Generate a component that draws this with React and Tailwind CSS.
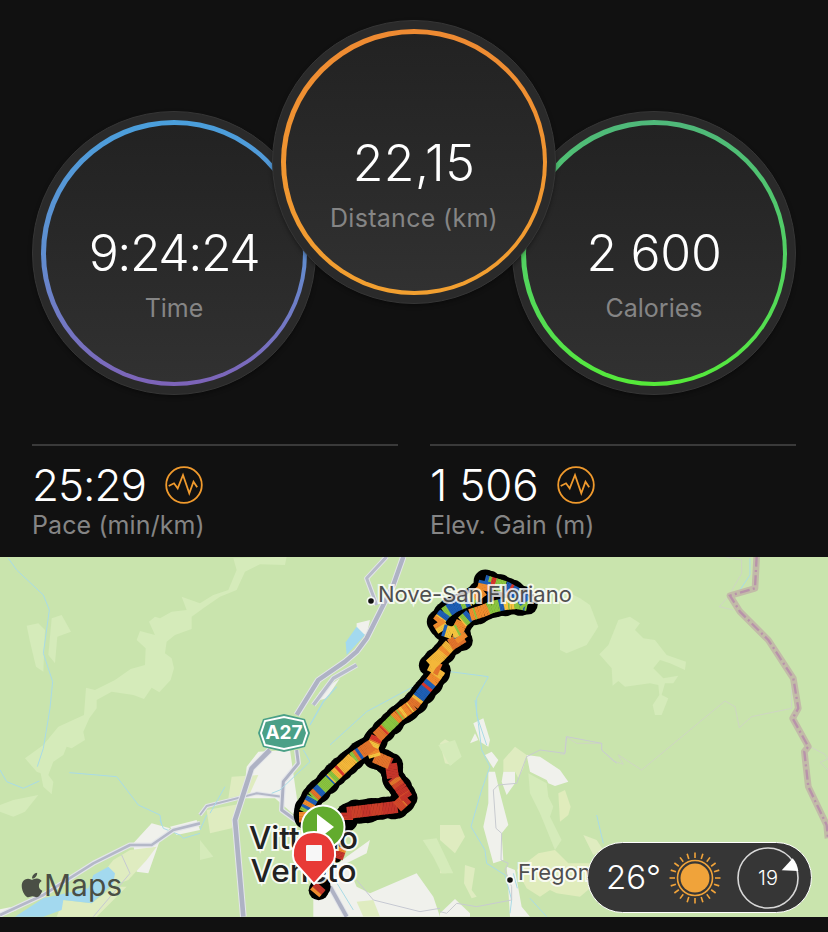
import { FaApple } from "react-icons/fa";

// small seeded generator so the track looks the same on every load
function seeded(seed) {
  let rnd = seed;
  return () => {
    rnd = (rnd * 1103515245 + 12345) % 2147483648;
    return rnd / 2147483648;
  };
}

// colourful streaks along the track
function buildStreaks(points, palette, seed) {
  const out = [];
  const next = seeded(seed);
  let mood = palette[0];
  let moodLeft = 0;
  let color = palette[0];
  let left = 0;
  for (let i = 0; i < points.length - 1; i++) {
    const [x1, y1] = points[i];
    const [x2, y2] = points[i + 1];
    const len = Math.hypot(x2 - x1, y2 - y1);
    const steps = Math.max(1, Math.round(len / 1.5));
    for (let s = 0; s < steps; s++) {
      if (moodLeft <= 0) {
        mood = palette[Math.floor(next() * palette.length)];
        moodLeft = 6 + Math.floor(next() * 10);
      }
      moodLeft--;
      if (left <= 0) {
        color = next() < 0.7 ? mood : palette[Math.floor(next() * palette.length)];
        left = 1 + Math.floor(next() * 3);
      }
      left--;
      const a = s / steps;
      const b = (s + 1.3) / steps;
      out.push({
        d: `M${(x1 + (x2 - x1) * a).toFixed(1)} ${(y1 + (y2 - y1) * a).toFixed(1)}L${(x1 + (x2 - x1) * b).toFixed(1)} ${(y1 + (y2 - y1) * b).toFixed(1)}`,
        color,
      });
    }
  }
  return out;
}

// round black dabs give the uneven edge of the track
function buildEdge(points, seed, base) {
  const out = [];
  const next = seeded(seed);
  for (let i = 0; i < points.length - 1; i++) {
    const [x1, y1] = points[i];
    const [x2, y2] = points[i + 1];
    const steps = Math.max(1, Math.round(Math.hypot(x2 - x1, y2 - y1) / 4));
    for (let s = 0; s < steps; s++) {
      out.push({
        x: x1 + ((x2 - x1) * s) / steps + (next() - 0.5) * 1.6,
        y: y1 + ((y2 - y1) * s) / steps + (next() - 0.5) * 1.6,
        r: base + next() * 1.8,
      });
    }
  }
  return out;
}

const line = (pts) => "M" + pts.map((p) => p.join(" ")).join("L");

const trackLower = [[347, 820], [347, 813], [372, 810], [397, 807], [407, 798], [400, 787], [393, 778], [391, 764], [375, 757]];
const trackMiddle = [[375, 757], [372, 748], [377, 737], [398, 716], [413, 705], [423, 692], [433, 680], [440, 670], [430, 665], [441, 655], [450, 645], [463, 637]];
const trackTop = [[463, 640], [457, 632], [462, 622], [470, 615], [483, 611], [492, 607], [505, 604], [517, 603], [527, 605], [520, 595], [505, 587], [485, 581], [483, 590], [470, 600], [455, 606], [445, 613], [438, 622], [443, 630], [452, 633], [458, 630]];
const trackLeft = [[372, 745], [353, 758], [333, 777], [313, 797], [305, 812], [305, 822]];
const trackEnd = [[341, 847], [337, 858]];
const trackTail = [[321, 886], [315, 893]];

const BRICK = ["#c5352a", "#c5352a", "#c5352a", "#cb3f2a"];
const BRICK_WARM = ["#c5352a", "#c5352a", "#d2482a", "#e2742c"];
const WARM = ["#e2742c", "#f08c2e", "#f4b73a", "#f4c33f", "#d8372b", "#e2742c", "#f08c2e", "#8bc540", "#8bc540", "#1f5fb5"];
const MIXED = ["#1f5fb5", "#1f5fb5", "#1f5fb5", "#8bc540", "#8bc540", "#f4c33f", "#f08c2e", "#d8372b"];

const streaks = [
  ...buildStreaks(trackLower.slice(0, 4), BRICK, 3),
  ...buildStreaks(trackLower.slice(3), BRICK_WARM, 7),
  ...buildStreaks(trackMiddle, WARM, 11),
  ...buildStreaks(trackTop, MIXED, 23),
  ...buildStreaks(trackLeft, WARM.concat(MIXED), 37),
  ...buildStreaks(trackEnd, ["#f08c2e", "#c5352a"], 5),
  ...buildStreaks(trackTail, ["#f08c2e", "#c5352a", "#f4b73a"], 9),
];

const edge = [
  ...buildEdge(trackLower, 4, 10.5),
  ...buildEdge(trackMiddle, 6, 10.5),
  ...buildEdge(trackTop, 8, 10),
  ...buildEdge(trackLeft, 10, 10.5),
  ...buildEdge(trackTail, 12, 9),
];

const sunRays = Array.from({ length: 20 }, (_, i) => (i * 360) / 20);

function MapDrawing() {
  return (
    <svg viewBox="0 557 828 360" className="absolute inset-0 h-full w-full">
      <rect x="0" y="557" width="828" height="360" fill="#c9e4ad" />

      {/* west side of the map */}
      <g transform="translate(0 555) scale(0.3333)">
        <path
          fill="#d5ebba"
          d="M700 10L710 45L685 105L640 120L600 145L545 125L560 165L515 170L480 190L465 185L447 200L465 240L420 228L410 255L437 280L435 330L392 342L345 375L285 405L258 398L252 480L175 515L130 570L75 610L110 650L122 655L130 695L155 718L160 680L145 660L160 620L190 600L200 575L215 580L255 555L250 530L268 490L290 460L290 435L335 410L400 420L432 432L455 398L478 412L512 375L522 340L515 310L495 295L500 260L525 240L575 222L575 185L610 160L660 125L710 105L735 50L780 28L855 30L860 5Z"
        />
        <path fill="#d5ebba" d="M80 212L115 205L135 225L130 350L108 335L90 260Z" />
        <path fill="#d5ebba" d="M155 190L185 180L213 230L172 245L165 325L145 300Z" />
        <path fill="#d5ebba" d="M0 750L40 735L115 720L75 770L40 785L0 770Z" />
        <g fill="none" stroke="#a9dbe6" strokeWidth="3">
          <path d="M25 10L50 45L130 120L148 165L130 295L158 380L150 460L130 580L112 635" />
          <path d="M0 645L20 680L70 700L118 678" />
          <path d="M208 653L350 665L415 750L480 780L485 810" />
        </g>
      </g>

      {/* east side of the map */}
      <g transform="translate(560 555) scale(0.3333)">
        <path fill="#d5ebba" d="M0 100L60 130L90 150L115 215L80 270L20 295L0 285Z" />
        <path
          fill="#d5ebba"
          d="M175 195L210 185L240 205L225 225L250 250L285 255L320 300L378 320L375 345L330 325L300 315L280 340L310 370L355 362L340 385L315 385L305 420L325 430L305 480L285 480L278 450L298 420L295 390L270 385L195 395L175 378L158 392L155 340L118 298L145 270Z"
        />
        <g fill="none" stroke="#cfd3c6" strokeWidth="2.5">
          <path d="M245 645L495 438L525 455L538 518L575 485L695 460L695 380" />
          <path d="M245 645L175 600L190 628L160 618L125 585L125 565L50 565L18 545L14 598L0 597" />
          <path d="M495 5L545 15L545 55L505 125L478 155L520 165" />
          <path d="M750 575L795 598L804 612L780 622L804 645" />
        </g>
        <path d="M570 10L570 60L540 105L510 125" fill="none" stroke="#a9dbe6" strokeWidth="3" />
        <path
          d="M590 5L585 100L510 122L540 170L625 255L700 370L715 460L698 490L745 575L733 590L745 695L800 810L804 850"
          fill="none"
          stroke="#c2bba8"
          strokeWidth="20"
          strokeLinejoin="round"
        />
        <path
          d="M590 5L585 100L510 122L540 170L625 255L700 370L715 460L698 490L745 575L733 590L745 695L800 810L804 850"
          fill="none"
          stroke="#b893aa"
          strokeWidth="7"
          strokeDasharray="30 10 6 10"
        />
      </g>

      {/* valley east of the town, around Fregona */}
      <g transform="translate(440 700) scale(0.3333)">
        <path fill="#dfecc0" d="M0 130L15 118L45 135L50 165L35 195L15 190Z" />
        <path fill="#dfecc0" d="M0 375L60 375L75 410L45 460L0 420Z" />
        <path fill="#dfecc0" d="M430 405L470 420L490 450L460 465Z" />
        <path fill="#dfecc0" d="M75 495L105 505L95 570L110 590L95 595L72 550Z" />
        <path fill="#dfecc0" d="M0 500L20 520L0 520Z" />
        <path fill="#dfecc0" d="M190 180L225 140L260 165L250 205L235 235L225 215L190 215Z" />
        <path fill="#e0ecbc" d="M355 280L375 270L392 320L385 345L360 365Z" />
        <path fill="#d5ebba" d="M265 220L320 250L325 290L340 320L330 350L365 420L345 450L300 340L270 280Z" />
        <path fill="#e0ecbc" d="M295 460L345 450L385 490L450 490L480 540L420 590L350 580L330 570L300 590L260 565L230 510Z" />
        <path fill="#f0f1ec" d="M100 70L130 55L150 120L145 140L120 125Z" />
        <path fill="#f0f1ec" d="M90 130L105 100L115 120Z" />
        <path fill="#f0f1ec" d="M135 165L155 155L175 180L160 205Z" />
        <path fill="#f0f1ec" d="M145 215L165 215L180 280L205 375L185 400L190 480L160 490L130 380L145 310Z" />
        <path fill="#f0f1ec" d="M190 215L225 215L225 250L200 285L185 245Z" />
        <path fill="#f0f1ec" d="M260 165L300 170L360 210L385 245L345 258L325 250L320 240L270 215Z" />
        <path fill="#f0f1ec" d="M200 500L225 510L245 620L270 650L210 650L205 570Z" />
        <path fill="#f0f1ec" d="M0 640L45 597L90 640L90 650L0 650Z" />
        <g fill="none" stroke="#a9dbe6" strokeWidth="3">
          <path d="M105 0L115 70L125 150L150 200L125 270L93 380L135 450L140 490L195 525L215 600L210 640" />
          <path d="M220 520L232 565" />
          <path d="M270 595L320 650" />
          <path d="M470 345L490 430" />
        </g>
        <g fill="none" stroke="#c8cbd0" strokeWidth="3">
          <path d="M380 110L375 160L300 150L260 170L230 250L175 255L160 270L168 385L185 400L183 480L205 490L195 510L215 560L215 600L110 620L50 610L20 640L0 635" />
          <path d="M380 110L485 130L485 150L530 190" />
        </g>
      </g>

      {/* town and highway, lower middle */}
      <g transform="translate(200 730) scale(0.3333)">
        <path fill="#f0f1ec" d="M140 110L175 65L270 60L300 270L225 205L130 205Z" />
        <path fill="#dfecc0" d="M95 140L175 135L150 190L85 205Z" />
        <path fill="#dfecc0" d="M20 240L130 220L95 295L30 310Z" />
        <path fill="#d5ebba" d="M0 330L40 380L0 390Z" />
        <path fill="#f0f1ec" d="M340 460L440 380L510 330L500 370L440 400L470 470L510 490L650 430L700 500L720 560L340 560Z" />
        <path fill="#dfecc0" d="M470 515L520 510L540 560L490 560Z" />
        <path fill="#d5ebba" d="M715 45L765 30L785 80L750 108Z" />
        <path fill="#d5ebba" d="M668 330L710 325L760 430L725 430L700 380Z" />
        <g fill="none" strokeLinejoin="round">
          <path d="M0 255L20 228L170 190L245 200" stroke="#e3e5ea" strokeWidth="12" />
          <path d="M0 255L20 228L170 190L245 200" stroke="#b4b8c8" strokeWidth="6" />
          <path d="M290 60L295 100L250 155L245 240L300 280" stroke="#e3e5ea" strokeWidth="16" />
          <path d="M290 60L295 100L250 155L245 240L300 280" stroke="#aeb2c4" strokeWidth="9" />
          <path d="M210 60L155 115L105 270L130 560" stroke="#e3e5ea" strokeWidth="20" />
          <path d="M210 60L155 115L105 270L130 560" stroke="#aeb2c4" strokeWidth="14" />
          <path d="M390 470L440 560" stroke="#e3e5ea" strokeWidth="18" />
          <path d="M390 470L440 560" stroke="#aeb2c4" strokeWidth="12" />
          <path d="M470 450L520 510L660 545L720 535" stroke="#c6c9d2" strokeWidth="3" />
          <path d="M310 60L330 95L240 180L215 190" stroke="#a9dbe6" strokeWidth="3" />
          <path d="M20 255L0 300M75 170L30 250" stroke="#a9dbe6" strokeWidth="3" />
          <path d="M405 450L460 540" stroke="#a9dbe6" strokeWidth="3" />
        </g>
      </g>

      {/* highway going north */}
      <g transform="translate(200 555) scale(0.3333)">
        <path fill="#f0f1ec" d="M470 205L510 195L500 240L470 235Z" />
        <path fill="#a3d9ef" d="M437 262L470 215L495 240L440 300Z" />
        <path fill="#f0f1ec" d="M360 410L420 370L380 430L340 440Z" />
        <g fill="none" strokeLinejoin="round">
          <path d="M390 570L500 470L640 395L750 350L865 365L830 430L830 480L860 570" stroke="#a9dbe6" strokeWidth="3" />
          <path d="M330 510L370 440L410 395" stroke="#a9dbe6" strokeWidth="4" />
          <path d="M560 5L500 70L530 150" stroke="#e3e5ea" strokeWidth="15" />
          <path d="M560 5L500 70L530 150" stroke="#b7bbca" strokeWidth="9" />
          <path d="M470 330L400 370L340 450" stroke="#e3e5ea" strokeWidth="16" />
          <path d="M470 330L400 370L340 450" stroke="#b7bbca" strokeWidth="10" />
          <path d="M610 5L580 90L540 170L500 250L470 290L435 320L355 375L290 480" stroke="#e3e5ea" strokeWidth="19" />
          <path d="M610 5L580 90L540 170L500 250L470 290L435 320L355 375L290 480" stroke="#aeb2c4" strokeWidth="13" />
        </g>
      </g>

      {/* lake and road in the south west corner */}
      <g transform="translate(0 820) scale(0.3333)">
        <path fill="#f0f1ec" d="M400 70L455 10L510 25L480 60L445 160L410 155Z" />
        <path fill="#f0f1ec" d="M510 20L590 0L600 30L530 45Z" />
        <path fill="#dfecc0" d="M340 120L390 90L470 80L440 120L385 180L330 200L300 170Z" />
        <path fill="#dfecc0" d="M190 240L275 250L340 200L380 200L290 290L170 290Z" />
        <path fill="#a3d9ef" d="M45 290L130 235L265 205L280 165L325 140L345 160L340 190L275 250L190 240L185 270L130 290Z" />
        <path fill="#f0f1ec" d="M0 268L30 262L50 270L0 290Z" />
        <path d="M365 105L390 160L280 290" fill="none" stroke="#c6c9d2" strokeWidth="3" />
        <path d="M480 0L490 25L540 45L550 55L600 40" fill="none" stroke="#a9dbe6" strokeWidth="3" />
        <path d="M0 285L130 225L280 130L390 75L455 75L520 30L600 10" fill="none" stroke="#e3e5ea" strokeWidth="15" strokeLinejoin="round" />
        <path d="M0 285L130 225L280 130L390 75L455 75L520 30L600 10" fill="none" stroke="#b4b8c8" strokeWidth="8" strokeLinejoin="round" />
      </g>

      {/* recorded track: black edge first, colour on top */}
      <g fill="#000">
        {edge.map((c, i) => (
          <circle key={i} cx={c.x} cy={c.y} r={c.r} />
        ))}
      </g>
      <path d={line(trackEnd)} fill="none" stroke="#000" strokeWidth="9" strokeLinecap="round" />
      <g fill="none" strokeWidth="12">
        {streaks.map((s, i) => (
          <path key={i} d={s.d} stroke={s.color} />
        ))}
      </g>

      {/* A27 shield */}
      <path d="M258 733L263 719L284 714L305 719L310 733L305 747L284 752L263 747Z" fill="#4aa087" />
      <path d="M261 733L265 721L284 717L303 721L307 733L303 745L284 749L265 745Z" fill="none" stroke="#fff" strokeWidth="2" />

      {/* place dots */}
      <circle cx="371" cy="601" r="4.5" fill="#fff" opacity="0.8" />
      <circle cx="371" cy="601" r="2.8" fill="#111" />
      <circle cx="510" cy="880" r="4.5" fill="#fff" opacity="0.8" />
      <circle cx="510" cy="880" r="2.8" fill="#111" />
    </svg>
  );
}

function MapPins() {
  return (
    <svg viewBox="0 557 828 360" className="absolute inset-0 h-full w-full">
      <circle cx="323" cy="827" r="21.5" fill="#62ab2e" stroke="#fff" strokeWidth="2" />
      <path d="M317 814L334 827L317 840Z" fill="#fff" />
      <path
        d="M314 884L296 864C289 856 293 832 314 832C335 832 339 856 332 864Z"
        fill="#e83a36"
        stroke="#fff"
        strokeWidth="2"
        strokeLinejoin="round"
      />
      <rect x="306" y="845" width="16" height="16" rx="1" fill="#f7f7f7" />
    </svg>
  );
}

function RingStat({ value, label, ring, pushDown, front, valueClass = "", labelClass = "" }) {
  return (
    <div
      className={`h-[284px] w-[284px] shrink-0 rounded-full border border-[#363636] bg-[#2a2a2a] p-2 shadow-[0_2px_4px_rgba(0,0,0,0.35)] ${
        pushDown ? "mt-[91px]" : ""
      } ${front ? "relative z-10 mx-[-44px]" : ""}`}
    >
      <div className={`h-full w-full rounded-full p-[4.5px] ${ring}`}>
        <div className="flex h-full w-full flex-col items-center rounded-full bg-linear-to-b from-[#222222] to-[#313131] pt-[100px]">
          <span className={`text-[50px] leading-[56px] font-light text-white ${valueClass}`}>{value}</span>
          <span className={`text-[25px] leading-[30px] text-[#858585] ${labelClass}`}>{label}</span>
        </div>
      </div>
    </div>
  );
}

function PulseIcon() {
  return (
    <svg viewBox="0 0 38 38" className="h-[38px] w-[38px]" fill="none" stroke="#f09a2d" strokeWidth="1.8">
      <circle cx="19" cy="19" r="17.8" />
      <path d="M3.7 20L9 17.3L12.7 22.3L18 9L24.3 27.3L28.5 15.7L32.2 21.3" strokeLinejoin="miter" />
    </svg>
  );
}

function SmallStat({ value, label, valueClass }) {
  return (
    <div className="border-t-2 border-[#3a3a3a] pt-[14px]">
      <div className="flex items-center gap-[19px]">
        <span className={`text-[44px] leading-[50px] font-light text-white ${valueClass}`}>{value}</span>
        <PulseIcon />
      </div>
      <div className="text-[25px] leading-[30px] tracking-[0.1px] text-[#858585]">{label}</div>
    </div>
  );
}

function WeatherPill() {
  return (
    <div className="absolute top-[285px] left-[587px] flex h-[71px] w-[225px] items-center rounded-full border border-white bg-[#363636] pl-[18px]">
      <span className="w-[62px] text-[33px] leading-none font-light text-white">26°</span>
      <svg viewBox="0 0 54 54" className="h-[54px] w-[54px]">
        {sunRays.map((deg) => (
          <line key={deg} x1="27" y1="7" x2="27" y2="1.5" stroke="#f0a33a" strokeWidth="1.6" transform={`rotate(${deg} 27 27)`} />
        ))}
        <circle cx="27" cy="27" r="17.5" fill="none" stroke="#f0a33a" strokeWidth="1.6" />
        <circle cx="27" cy="27" r="14.5" fill="#f0a33a" />
      </svg>
      <div className="relative ml-[15px] flex h-[62px] w-[62px] items-center justify-center">
        <svg viewBox="0 0 62 62" className="absolute inset-0 h-full w-full" fill="none">
          <circle cx="31" cy="31" r="30" stroke="#d8d8d8" strokeWidth="1.6" />
          <path d="M44.7 23.3L55.7 11.3C59 15 60.5 19.5 61.3 24Z" fill="#fff" />
        </svg>
        <span className="text-[20px] leading-none font-light text-white">19</span>
      </div>
    </div>
  );
}

export default function App() {
  return (
    <div className="flex h-[932px] flex-col overflow-hidden bg-[#111111] font-[Inter,sans-serif]">
      {/* RINGS */}
      <div className="flex justify-center pt-5">
        <RingStat
          value="9:24:24"
          label="Time"
          pushDown
          valueClass="tracking-[-1.5px]"
          labelClass="mt-3"
          ring="bg-linear-to-b from-[#4a9fdc] via-[#5f8ed0] to-[#7d63b8]"
        />
        <RingStat
          value="22,15"
          label="Distance (km)"
          front
          valueClass="translate-y-px tracking-[0.4px]"
          labelClass="mt-[13px] tracking-[0.3px]"
          ring="bg-linear-to-b from-[#ee8a32] to-[#f2a030]"
        />
        <RingStat
          value="2 600"
          label="Calories"
          pushDown
          valueClass="tracking-[-0.3px]"
          labelClass="mt-3"
          ring="bg-linear-to-b from-[#4fb87a] to-[#55ea38]"
        />
      </div>

      {/* STATS */}
      <div className="mt-[49px] grid grid-cols-2 gap-8 px-8">
        <SmallStat value="25:29" label="Pace (min/km)" valueClass="tracking-[-1px]" />
        <SmallStat value="1 506" label="Elev. Gain (m)" valueClass="tracking-[-0.2px]" />
      </div>

      {/* MAP */}
      <div className="relative mt-auto mb-[15px] h-[360px] overflow-hidden">
        <MapDrawing />

        <span className="absolute top-[157px] left-[260px] w-12 text-center text-[19px] leading-[38px] font-bold text-white">A27</span>
        <span className="absolute top-[23px] left-[378px] text-[22px] leading-[28px] whitespace-nowrap text-[#4f4f4f] [-webkit-text-stroke:4px_rgba(255,255,255,0.8)] [paint-order:stroke]">
          Nove-San Floriano
        </span>
        <span className="absolute top-[301px] left-[518px] text-[22px] leading-[28px] whitespace-nowrap text-[#4f4f4f] [-webkit-text-stroke:4px_rgba(255,255,255,0.8)] [paint-order:stroke]">
          Fregon
        </span>
        <div className="absolute top-[264px] left-[249px] text-center text-[31.5px] leading-[33px] font-medium text-[#222] [-webkit-text-stroke:4px_rgba(255,255,255,0.85)] [paint-order:stroke]">
          Vittorio
          <br />
          Veneto
        </div>

        <MapPins />

        {/* MAPS LOGO */}
        <div className="absolute top-[310px] left-[20px] flex items-center text-[#4a4f45]">
          <FaApple className="h-[28px] w-[24px]" />
          <span className="text-[30px] leading-[36px]">Maps</span>
        </div>

        <WeatherPill />
      </div>
    </div>
  );
}
